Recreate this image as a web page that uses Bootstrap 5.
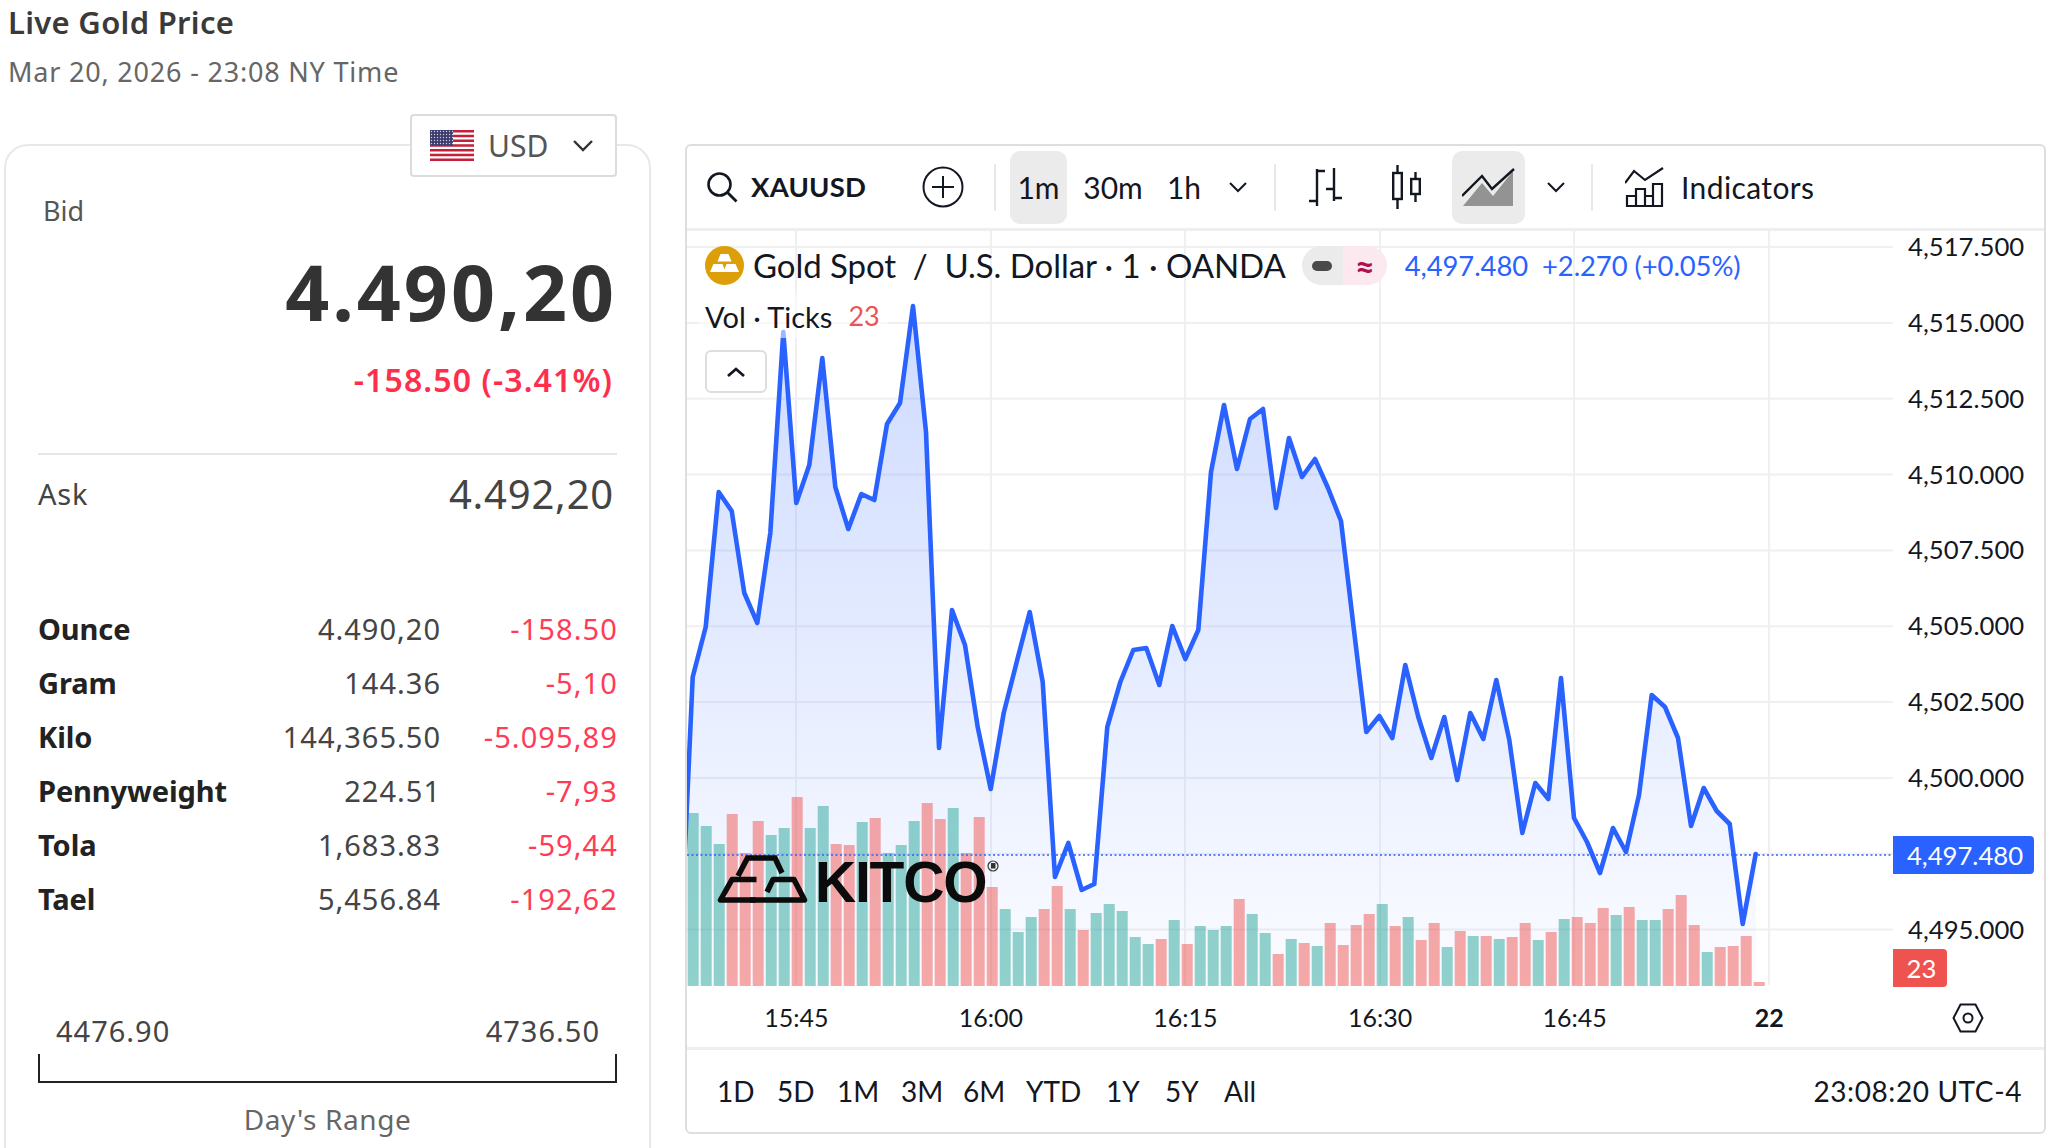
<!DOCTYPE html>
<html lang="en">
<head>
    <meta charset="UTF-8">
    <meta name="viewport" content="width=device-width, initial-scale=1.0">
    <title>Live Gold Price</title>
    <link href="https://cdn.jsdelivr.net/npm/bootstrap@5.3.0/dist/css/bootstrap.min.css" rel="stylesheet">
    <style>
        html, body { height: 1148px; overflow: hidden; }
        body { background: #fff; font-family: "Noto Sans", "Liberation Sans", sans-serif; color: #3a3a3a; }
        .page-wrap { padding: 0 2px 0 4px; }

        .page-title { font-size: 31px; font-weight: 600; line-height: 38px; color: #3a3a3a; margin: 3px 0 0 4px; letter-spacing: .3px; }
        .page-date { font-size: 27px; line-height: 38px; color: #666; margin: 12px 0 0 4px; letter-spacing: .8px; }
        .panels { margin-top: 53px; gap: 34px; }

        /* left card */
        .quote-card { position: relative; width: 647px; height: 1040px; flex: none; border: 2px solid #e8e8e8; border-radius: 24px; padding: 0 32px; }
        .cur-btn { position: absolute; left: 404px; top: -32px; width: 207px; height: 63px; background: #fff; border: 2px solid #dcdcdc; border-radius: 4px; padding: 0 21px 0 18px; font-size: 30px; color: #555; gap: 14px; }
        .bid-label { font-size: 27px; line-height: 40px; margin: 45px 0 0 5px; color: #555; }
        .bid-price { font-size: 77px; font-weight: 700; line-height: 90px; text-align: right; color: #333; margin: 16px 0 0 0; letter-spacing: 3px; }
        .bid-change { font-size: 32px; font-weight: 600; line-height: 44px; text-align: right; color: #ff2e4c; margin: 21px 4px 0 0; letter-spacing: 1.1px; }
        .ask-row { border-top: 2px solid #e6e6e6; margin-top: 51px; height: 80px; color: #444; }
        .ask-label { font-size: 29px; letter-spacing: .8px; }
        .ask-price { font-size: 40px; margin-right: 3px; letter-spacing: .8px; }
        .unit-table { margin: 69px 0 0; font-size: 29px; table-layout: fixed; width: calc(100% + 1px); }
        .unit-table td { padding: 0; height: 54px; background: transparent; vertical-align: middle; color: #444; white-space: nowrap; }
        .unit-table td:first-child { font-weight: 700; color: #222; letter-spacing: -.1px; }
        .unit-table td.up-val { text-align: right; width: 203px; letter-spacing: 1px; }
        .unit-table td.ch-val { text-align: right; width: 177px; color: #ff3b55; letter-spacing: 1.1px; }
        .range-vals { margin-top: 85px; padding: 0 17px 0 18px; font-size: 29px; line-height: 40px; color: #444; letter-spacing: 1px; }
        .range-bar { height: 29px; margin-top: 3px; border: 2px solid #222; border-top: 0; }
        .range-name { text-align: center; font-size: 28px; line-height: 40px; color: #666; margin-top: 16px; letter-spacing: .6px; }

        /* chart card */
        .chart-card { width: 1361px; height: 990px; flex: none; border: 2px solid #dedede; border-radius: 6px; font-family: "Lato", "Liberation Sans", sans-serif; color: #131722; overflow: hidden; }
        .tv-toolbar { height: 85px; border-bottom: 3px solid #eeeeee; padding-left: 19px; font-size: 30px; }
        .tv-symbol { font-weight: 700; font-size: 27.5px; margin-left: 13px; width: 171px; letter-spacing: .2px; }
        .tv-sep { width: 2px; height: 47px; background: #e8e8e8; flex: none; }
        .tv-tab { height: 73px; display: flex; align-items: center; justify-content: center; border-radius: 10px; flex: none; }
        .tv-tab.is-on { background: #ebebeb; }
        .tv-pane { height: 756px; }
        .tv-plot { position: relative; width: 1206px; height: 756px; flex: none; }
        .tv-plot svg.price-svg { display: block; }
        .tv-legend { position: absolute; left: 18px; top: 15px; font-size: 33px; line-height: 39px; gap: 9px; white-space: nowrap; letter-spacing: -.06px; }
        .legend-pill { margin-left: 7px; height: 39px; width: 85px; flex: none; }
        .legend-pill span { display: flex; align-items: center; justify-content: center; height: 100%; }
        .pill-a { width: 41px; background: #ebebeb; border-radius: 20px 0 0 20px; }
        .pill-b { width: 44px; background: #fce8ef; color: #b0114b; font-weight: 700; font-size: 34px; line-height: 39px; border-radius: 0 20px 20px 0; }
        .legend-nums { color: #2962ff; font-size: 27.4px; margin-left: 9px; }
        .tv-vol { position: absolute; left: 12px; top: 64px; height: 43px; padding: 0 8px 0 6px; background: rgba(255,255,255,.55); font-size: 29px; gap: 16px; white-space: nowrap; }
        .tv-vol b { font-weight: 400; font-size: 27px; color: #ef5350; }
        .tv-collapse { position: absolute; left: 18px; top: 119px; width: 62px; height: 43px; background: #fff; border: 2px solid #dedede; border-radius: 6px; }
        .kitco-mark { position: absolute; left: 30px; top: 624px; gap: 7px; }
        .kitco-word { font-family: "Liberation Sans", sans-serif; font-weight: 700; font-size: 57px; line-height: 42px; letter-spacing: -1.2px; color: #0b0b0b; }
        .kitco-r { position: absolute; right: -13px; top: -1px; }
        .tv-prices { position: relative; flex: 1; font-size: 25.7px; padding-left: 15px; margin-top: -7px; height: 763px; }
        .tv-prices div.price-cell { height: 75.85px; line-height: 44px; }
        .price-tag { position: absolute; left: 0; color: #fff; text-align: center; font-size: 25.7px; height: 38px; line-height: 38px; border-radius: 0 4px 4px 0; }
        .price-tag.is-last { top: 612px; width: 141px; padding-left: 3px; background: #2962ff; }
        .price-tag.is-vol { top: 725px; width: 54px; padding-left: 3px; background: #ef5350; }
        .tv-times { height: 60px; font-size: 25px; padding: 2px 0 0 12px; }
        .time-cell { width: 194.6px; text-align: center; flex: none; }
        .time-gear { margin-left: 85px; }
        .tv-range { height: 85px; border-top: 3px solid #eeeeee; font-size: 28px; padding: 0 22px 0 30px; }
        .tv-range span.rng { flex: none; }
        .rng-clock { letter-spacing: .6px; }
    </style>
</head>
<body>
    <div class="page-wrap">
        <h1 class="page-title">Live Gold Price</h1>
        <div class="page-date">Mar 20, 2026 - 23:08 NY Time</div>

        <div class="panels d-flex align-items-start">
            <div class="quote-card">
                <div class="cur-btn d-flex align-items-center">
                    <svg width="44" height="31" viewBox="0 0 44 31">
                        <defs>
                            <pattern id="flagDots" width="3" height="3" patternUnits="userSpaceOnUse">
                                <rect width="3" height="3" fill="#3c3b6e"/><circle cx="1.5" cy="1.5" r=".7" fill="#cfd0e6"/>
                            </pattern>
                        </defs>
                        <rect width="44" height="31" fill="#fff"/>
                        <path d="M0 1.2h44M0 6h44M0 10.800h44M0 15.500h44M0 20.200h44M0 25h44M0 29.800h44" stroke="#c3203a" stroke-width="2.400"/>
                        <rect width="23" height="15.500" fill="url(#flagDots)"/>
                    </svg>
                    <span>USD</span>
                    <svg class="ms-auto" width="22" height="14" viewBox="0 0 22 14"><path d="M2 2l9 9 9-9" fill="none" stroke="#333" stroke-width="2.400"/></svg>
                </div>
                <div class="bid-label">Bid</div>
                <div class="bid-price">4.490,20</div>
                <div class="bid-change">-158.50 (-3.41%)</div>
                <div class="ask-row d-flex align-items-center justify-content-between">
                    <span class="ask-label">Ask</span>
                    <span class="ask-price">4.492,20</span>
                </div>
                <table class="table table-borderless unit-table">
                    <tbody>
                        <tr><td>Ounce</td><td class="up-val">4.490,20</td><td class="ch-val">-158.50</td></tr>
                        <tr><td>Gram</td><td class="up-val">144.36</td><td class="ch-val">-5,10</td></tr>
                        <tr><td>Kilo</td><td class="up-val">144,365.50</td><td class="ch-val">-5.095,89</td></tr>
                        <tr><td>Pennyweight</td><td class="up-val">224.51</td><td class="ch-val">-7,93</td></tr>
                        <tr><td>Tola</td><td class="up-val">1,683.83</td><td class="ch-val">-59,44</td></tr>
                        <tr><td>Tael</td><td class="up-val">5,456.84</td><td class="ch-val">-192,62</td></tr>
                    </tbody>
                </table>
                <div class="range-vals d-flex justify-content-between"><span>4476.90</span><span>4736.50</span></div>
                <div class="range-bar"></div>
                <div class="range-name">Day's Range</div>
            </div>

            <div class="chart-card">
                <div class="tv-toolbar d-flex align-items-center">
                    <svg width="32" height="32" viewBox="0 0 32 32"><circle cx="13.500" cy="13.500" r="11" fill="none" stroke="#131722" stroke-width="2.600"/><path d="M21.500 21.500l9 9" stroke="#131722" stroke-width="2.800"/></svg>
                    <span class="tv-symbol">XAUUSD</span>
                    <svg width="42" height="42" viewBox="0 0 42 42"><circle cx="21" cy="21" r="19.500" fill="none" stroke="#131722" stroke-width="2"/><path d="M21 10v22M10 21h22" stroke="#131722" stroke-width="2"/></svg>
                    <span class="tv-sep" style="margin-left:30px"></span>
                    <span class="tv-tab is-on" style="width:57px;margin-left:14px">1m</span>
                    <span class="tv-tab" style="width:74px;margin-left:9px">30m</span>
                    <span class="tv-tab" style="width:50px;margin-left:9px">1h</span>
                    <svg style="margin-left:20px" width="18" height="12" viewBox="0 0 18 12"><path d="M1 2l8 8 8-8" fill="none" stroke="#131722" stroke-width="2"/></svg>
                    <span class="tv-sep" style="margin-left:27px"></span>
                    <svg style="margin-left:33px" width="34" height="38" viewBox="0 0 34 38"><path d="M8 1v37M8 3h8M0 33h8M25 0v33M17 21h8M25 30h8" fill="none" stroke="#131722" stroke-width="2.400"/></svg>
                    <svg style="margin-left:49px" width="30" height="44" viewBox="0 0 30 44"><path d="M5.500 0v44M23.500 7v30" stroke="#131722" stroke-width="2.400"/><rect x="1.200" y="8" width="8.600" height="26" fill="#fff" stroke="#131722" stroke-width="2.400"/><rect x="19.200" y="14" width="8.600" height="15" fill="#fff" stroke="#131722" stroke-width="2.400"/></svg>
                    <span class="tv-tab is-on" style="width:73px;margin-left:30px">
                        <svg width="53" height="39" viewBox="0 0 53 39">
                            <defs><pattern id="areaDots" width="2" height="2" patternUnits="userSpaceOnUse"><rect width="2" height="2" fill="#ebebeb"/><circle cx="1" cy="1" r=".8" fill="#222"/></pattern></defs>
                            <path d="M1 38L20 15l11 13L51 3v35z" fill="url(#areaDots)"/>
                            <path d="M0 28L20 8l10 13L52 1" fill="none" stroke="#131722" stroke-width="2.400"/>
                        </svg>
                    </span>
                    <svg style="margin-left:22px" width="18" height="12" viewBox="0 0 18 12"><path d="M1 2l8 8 8-8" fill="none" stroke="#131722" stroke-width="2"/></svg>
                    <span class="tv-sep" style="margin-left:26px"></span>
                    <svg style="margin-left:32px" width="39" height="40" viewBox="0 0 39 40"><path d="M0 16L9 4l11 9L38 1" fill="none" stroke="#131722" stroke-width="2.200"/><path d="M2 39V29h9v10zM11 39V22h9v17zM20 39V29h8v10zM28 39V17h9v22z" fill="none" stroke="#131722" stroke-width="2.200"/></svg>
                    <span style="margin-left:17px;letter-spacing:.4px">Indicators</span>
                </div>

                <div class="tv-pane d-flex">
                    <div class="tv-plot">
                        <svg class="price-svg" id="priceChart" width="1206" height="756" viewBox="687 231 1206 756"></svg>

                        <div class="tv-legend d-flex align-items-center">
                            <svg width="39" height="39" viewBox="0 0 39 39"><circle cx="19.500" cy="19.500" r="19.500" fill="#dc9f0a"/><path d="M15.500 8h8l3 7.500h-14zM8.500 18h9l3 8H5zM21.500 18h9l3.500 8H18.500z" fill="#fff"/></svg>
                            <span>Gold Spot&nbsp; / &nbsp;U.S. Dollar · 1 · OANDA</span>
                            <span class="legend-pill d-flex">
                                <span class="pill-a"><svg width="20" height="10" viewBox="0 0 20 10"><rect width="20" height="10" rx="5" fill="#4a4a4a"/></svg></span>
                                <span class="pill-b">≈</span>
                            </span>
                            <span class="legend-nums">4,497.480&nbsp; +2.270 (+0.05%)</span>
                        </div>
                        <div class="tv-vol d-flex align-items-center"><span>Vol · Ticks</span><b>23</b></div>
                        <div class="tv-collapse d-flex align-items-center justify-content-center">
                            <svg width="20" height="12" viewBox="0 0 20 12"><path d="M2 10l8-7 8 7" fill="none" stroke="#131722" stroke-width="2.800"/></svg>
                        </div>
                        <div class="kitco-mark d-flex align-items-end">
                            <svg width="91" height="48" viewBox="0 0 91 48">
                                <path d="M21 21L30.500 3h27.500l7 15" fill="none" stroke="#0b0b0b" stroke-width="5.500"/>
                                <path d="M39.500 24.500H15L3.500 45h35" fill="none" stroke="#0b0b0b" stroke-width="5.500" stroke-linejoin="round"/>
                                <path d="M50 37l6-12.500h21l10.500 20.500H33" fill="none" stroke="#0b0b0b" stroke-width="5.500" stroke-linejoin="round"/>
                            </svg>
                            <div class="position-relative">
                                <span class="kitco-word d-block">KITCO</span>
                                <svg class="kitco-r" width="12" height="12" viewBox="0 0 12 12"><circle cx="6" cy="6" r="5" fill="none" stroke="#333" stroke-width="1.200"/><rect x="4" y="3" width="4.500" height="5.500" fill="#333"/></svg>
                            </div>
                        </div>
                    </div>
                    <div class="tv-prices">
                        <div class="price-cell">4,517.500</div>
                        <div class="price-cell">4,515.000</div>
                        <div class="price-cell">4,512.500</div>
                        <div class="price-cell">4,510.000</div>
                        <div class="price-cell">4,507.500</div>
                        <div class="price-cell">4,505.000</div>
                        <div class="price-cell">4,502.500</div>
                        <div class="price-cell">4,500.000</div>
                        <div class="price-cell">&nbsp;</div>
                        <div class="price-cell">4,495.000</div>
                        <div class="price-tag is-last">4,497.480</div>
                        <div class="price-tag is-vol">23</div>
                    </div>
                </div>

                <div class="tv-times d-flex align-items-center">
                    <span class="time-cell">15:45</span>
                    <span class="time-cell">16:00</span>
                    <span class="time-cell">16:15</span>
                    <span class="time-cell">16:30</span>
                    <span class="time-cell">16:45</span>
                    <span class="time-cell fw-bold">22</span>
                    <svg class="time-gear" width="32" height="30" viewBox="0 0 32 30"><path d="M8.500 1.500h15L30.500 15l-7 13.500h-15L1.500 15z" fill="none" stroke="#131722" stroke-width="2"/><circle cx="16" cy="15" r="4.500" fill="none" stroke="#131722" stroke-width="2"/></svg>
                </div>

                <div class="tv-range d-flex align-items-center">
                    <span class="rng" style="width:60px">1D</span>
                    <span class="rng" style="width:60px">5D</span>
                    <span class="rng" style="width:64px">1M</span>
                    <span class="rng" style="width:62px">3M</span>
                    <span class="rng" style="width:63px">6M</span>
                    <span class="rng" style="width:80px">YTD</span>
                    <span class="rng" style="width:59px">1Y</span>
                    <span class="rng" style="width:59px">5Y</span>
                    <span class="rng">All</span>
                    <span class="ms-auto rng-clock">23:08:20 UTC-4</span>
                </div>
            </div>
        </div>
    </div>

    <script src="https://cdn.jsdelivr.net/npm/bootstrap@5.3.0/dist/js/bootstrap.bundle.min.js"></script>
    <script>
        // line points: x, y in page pixels
        const linePts = [[680,960],[692.7,677],[705.7,627],[718.7,492],[731.7,511],[744.3,593],[757.3,623],[770.3,533],[783.3,332],[796.3,503],[809.3,465],[822.3,358],[835.3,487],[848.3,529],[861.3,494],[874.3,500],[887,424],[900,403],[913,306],[926,432],[939,748],[952,610],[965,645],[977.7,727],[990.7,789],[1003.7,713],[1016.7,662],[1029.7,612],[1042.7,682],[1055,877],[1068.3,843],[1081.7,890],[1094.3,884],[1107.3,727],[1120.3,682],[1133.3,650],[1146.3,648],[1159.3,685],[1172.3,626],[1185.3,659],[1198.3,630],[1211,472],[1224,405],[1237,469],[1250,419],[1263,409],[1276,508],[1289,438],[1302,477],[1315,459],[1328,488],[1341,521],[1353.7,628],[1366.3,732],[1379.3,716],[1392.3,738],[1405.3,665],[1418.3,717],[1431.3,758],[1444.3,717],[1457.3,780],[1470.3,713],[1483.3,739],[1496.3,680],[1509.3,740],[1522.3,833],[1535.3,783],[1548.3,799],[1561,678],[1574,818],[1587,842],[1600,873],[1613,828],[1626,852],[1639,795],[1651.7,695],[1665,707],[1678,738],[1691,826],[1703.7,788],[1716.7,811],[1729.7,824],[1742.7,924],[1755.7,854]];
        // volume: g/r + top y
        const volBars = 'g813 g826 g844 r814 r853 r821 g835 g828 r797 g828 g806 r844 r845 g822 r818 g853 g845 g821 r803 r819 g808 r853 r817 r887 g909 g932 g917 r909 r886 g909 r930 g913 g904 g911 g937 g944 r939 g920 r944 g926 g930 g926 r899 g914 g933 r954 g939 r943 g946 r923 r945 r925 r914 g904 r926 g917 r940 r923 g947 r931 g936 r936 g939 r937 r923 g940 r932 g919 r917 r923 r908 g915 r907 g920 g920 r909 r895 r925 g952 r947 r946 r936 r982'.split(' ');

        const chart = document.getElementById('priceChart');
        let svg = '<defs><linearGradient id="areaFill" gradientUnits="userSpaceOnUse" x1="0" y1="306" x2="0" y2="985"><stop offset="0" stop-color="#2962ff" stop-opacity=".23"/><stop offset="1" stop-color="#2962ff" stop-opacity=".02"/></linearGradient></defs>';

        // grid
        for (let i = 0; i < 10; i++) {
            const y = (247 + i * 75.85).toFixed(1);
            svg += `<line x1="687" x2="1893" y1="${y}" y2="${y}" stroke="#f0f0f1" stroke-width="2"/>`;
        }
        [796, 991, 1185, 1380, 1574, 1769].forEach(x => {
            svg += `<line x1="${x}" x2="${x}" y1="231" y2="985" stroke="#f0f0f1" stroke-width="2"/>`;
        });

        const ptsText = linePts.map(p => p.join(',')).join(' ');
        svg += `<polygon points="${ptsText} 1755.7,985 680,985" fill="url(#areaFill)"/>`;

        volBars.forEach((b, i) => {
            const cx = 693.2 + i * 13.0;
            const top = +b.slice(1);
            const color = b[0] === 'g' ? '#26a69a' : '#ef5350';
            svg += `<rect x="${(cx - 5.5).toFixed(1)}" y="${top}" width="11" height="${986 - top}" fill="${color}" fill-opacity=".5"/>`;
        });

        svg += `<line x1="687" x2="1893" y1="855" y2="855" stroke="#2962ff" stroke-width="1.500" stroke-dasharray="2 2.500"/>`;
        svg += `<polyline points="${ptsText}" fill="none" stroke="#2962ff" stroke-width="4.600" stroke-linejoin="round" stroke-linecap="round"/>`;
        chart.innerHTML = svg;
    </script>
</body>
</html>
